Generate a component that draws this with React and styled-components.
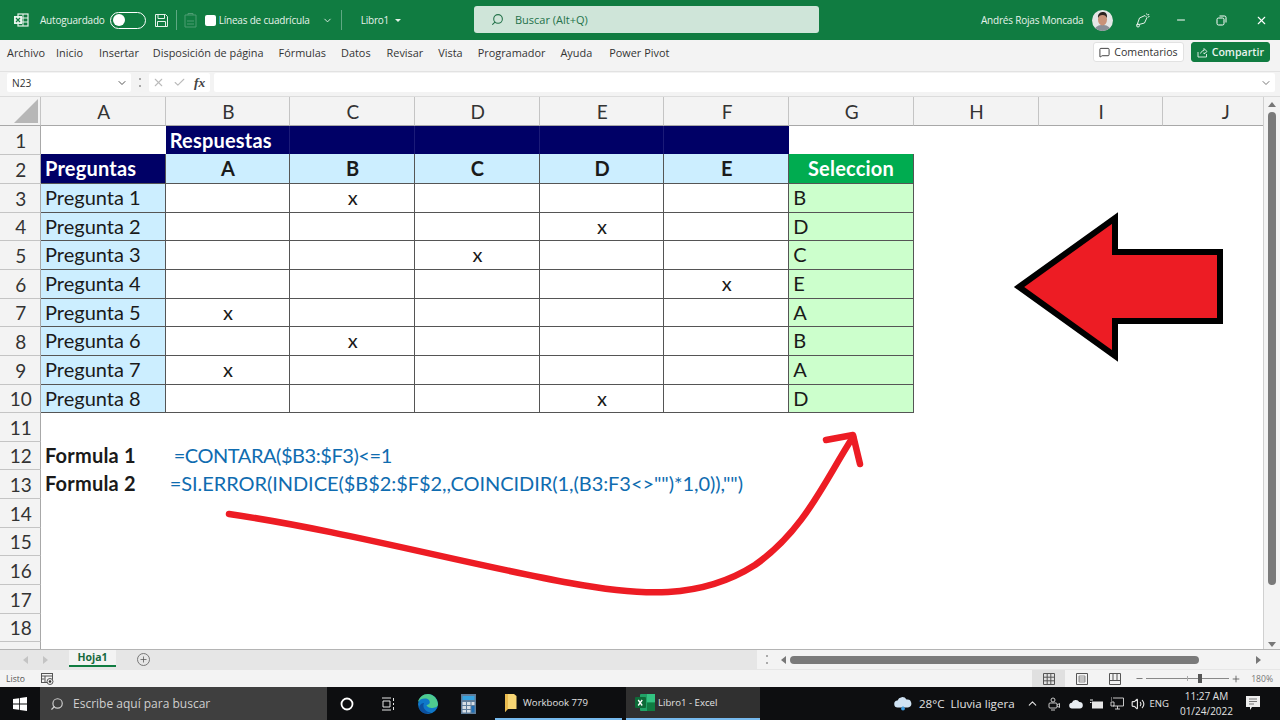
import React from "react";
import styled, { createGlobalStyle } from "styled-components";
import { Search, MessageSquare, ChevronDown, X, Check, Minus, Plus, ChevronUp, Volume2 } from "lucide-react";

const GlobalStyle = createGlobalStyle`
  html, body {
    margin: 0;
    padding: 0;
    width: 1280px;
    height: 720px;
    overflow: hidden;
    background: #fff;
  }
  * { box-sizing: border-box; }
`;

const UI_FONT = `"Open Sans", "Noto Sans", sans-serif`;
const CELL_FONT = `Lato, "Liberation Sans", sans-serif`;

const Page = styled.div`
  position: relative;
  width: 1280px;
  height: 720px;
  display: flex;
  flex-direction: column;
  overflow: hidden;
  font-family: ${UI_FONT};
`;

const Spacer = styled.span`
  display: block;
  flex: none;
  width: ${(p) => p.$w}px;
`;

const FlippedSearch = styled(Search)`
  transform: scaleX(-1);
  flex: none;
`;

/* title bar */
const TitleBar = styled.div`
  height: 40px;
  background: #107c41;
  color: #e6f2ea;
  display: flex;
  align-items: center;
  font-size: 10px;
  letter-spacing: -0.2px;
  white-space: nowrap;
  flex: none;
`;
const TitleLeft = styled.div`
  width: 474px;
  flex: none;
  display: flex;
  align-items: center;
  padding-left: 13px;
`;
const Toggle = styled.div`
  width: 36px;
  height: 17px;
  border: 1px solid #fff;
  border-radius: 9px;
  margin: 0 8px 0 5px;
  padding: 1.5px 2px;
  &::before {
    content: "";
    display: block;
    width: 12px;
    height: 12px;
    border-radius: 50%;
    background: #fff;
  }
`;
const TitleDivider = styled.div`
  width: 1px;
  height: 20px;
  background: #5fa883;
  margin: 0 ${(p) => p.$gap || 8}px;
`;
const WhiteBox = styled.div`
  width: 11px;
  height: 11px;
  background: #fff;
  border-radius: 2px;
  margin: 0 3px 0 8px;
`;
const Caret = styled.div`
  width: 0;
  height: 0;
  margin-left: 6px;
  border-left: 3px solid transparent;
  border-right: 3px solid transparent;
  border-top: 3px solid #e6f2ea;
`;
const SearchBox = styled.div`
  width: 345px;
  height: 27px;
  flex: none;
  margin-top: -1px;
  background: #cfe5d9;
  border-radius: 3px;
  display: flex;
  align-items: center;
  padding-left: 17px;
  gap: 11px;
  color: #24724a;
  font-size: 11px;
  letter-spacing: 0;
`;
const TitleRight = styled.div`
  flex: 1;
  display: flex;
  align-items: center;
  padding-left: 162px;
`;
const Avatar = styled.div`
  width: 21px;
  height: 21px;
  border-radius: 50%;
  overflow: hidden;
  margin-left: 9px;
  flex: none;
`;
const WinControl = styled.div`
  width: 40px;
  flex: none;
  display: flex;
  justify-content: center;
  align-items: center;
`;

/* ribbon tabs */
const TabsBar = styled.div`
  height: 32px;
  background: #f3f3f3;
  display: flex;
  align-items: center;
  padding: 0 10px 7px 7px;
  flex: none;
  font-size: 10.9px;
  color: #333;
  border-bottom: 1px solid #e2e2e2;
`;
const RibbonTab = styled.span`
  margin-right: ${(p) => p.$gap}px;
  white-space: nowrap;
`;
const ActionGroup = styled.div`
  margin-left: auto;
  display: flex;
  gap: 7px;
`;
const ActionButton = styled.div`
  height: 20px;
  border-radius: 3px;
  display: flex;
  align-items: center;
  gap: 4px;
  padding: 0 5px;
  font-size: 10.6px;
  background: ${(p) => (p.$primary ? "#107c41" : "#fff")};
  color: ${(p) => (p.$primary ? "#e9f4ee" : "#333")};
  font-weight: ${(p) => (p.$primary ? 600 : 400)};
  border: 1px solid ${(p) => (p.$primary ? "#107c41" : "#e2e2e2")};
`;

/* formula bar */
const FormulaBar = styled.div`
  height: 25px;
  background: #f3f3f3;
  display: flex;
  align-items: center;
  padding: 0 5px 3px 7px;
  flex: none;
  border-bottom: 1px solid #dcdcdc;
`;
const NameBox = styled.div`
  width: 124px;
  height: 19px;
  background: #fff;
  border-radius: 2px;
  display: flex;
  align-items: center;
  justify-content: space-between;
  padding: 0 3px 0 5px;
  font-size: 10.2px;
  color: #333;
`;
const Dots = styled.div`
  width: 2px;
  height: 9px;
  margin: 0 8px;
  border-top: 2px solid #aaa;
  border-bottom: 2px solid #aaa;
`;
const FxBox = styled.div`
  width: 61px;
  height: 19px;
  background: #fff;
  border-radius: 2px;
  display: flex;
  align-items: center;
  gap: 8px;
  padding: 0 3px;
  color: #bbb;
`;
const Fx = styled.span`
  font-family: "Liberation Serif", serif;
  font-style: italic;
  font-weight: 700;
  font-size: 13.5px;
  color: #444;
`;
const FormulaInput = styled.div`
  flex: 1;
  height: 19px;
  margin-left: 4px;
  background: #fff;
  display: flex;
  align-items: center;
  justify-content: flex-end;
  padding-right: 3px;
  border-radius: 2px;
`;

/* sheet */
const SheetWrap = styled.div`
  flex: 1;
  display: flex;
  min-height: 0;
  background: #fff;
`;
const Sheet = styled.div`
  width: 1263px;
  overflow: hidden;
  flex: none;
`;
const Row = styled.div`
  display: grid;
  grid-template-columns: 41px repeat(10, 124.7px);
  height: ${(p) => p.$height}px;
  font-family: ${CELL_FONT};
  font-size: 20px;
`;
const HeaderCell = styled.div`
  background: #f3f3f3;
  border-right: 1px solid #c4c4c4;
  border-bottom: 1px solid #a8a8a8;
  display: flex;
  align-items: center;
  justify-content: center;
  color: #333;
  font-size: 19px;
  padding: 1px 0 0 1.5px;
  position: relative;
`;
const RowHeader = styled(HeaderCell)`
  border-right: 1px solid #a8a8a8;
  border-bottom: none;
  border-top: ${(p) => (p.$first ? "none" : "1px solid #c4c4c4")};
  padding-top: 0;
`;
const CornerMark = styled.div`
  width: 24px;
  height: 24px;
  position: absolute;
  right: 2px;
  bottom: 2px;
  background: #b7b7b7;
  clip-path: polygon(100% 0, 100% 100%, 0 100%);
`;
const Cell = styled.div`
  background: ${(p) => p.$bg || "transparent"};
  color: ${(p) => p.$color || "#1a1a1a"};
  font-weight: ${(p) => (p.$bold ? 700 : 400)};
  letter-spacing: ${(p) => (p.$track !== undefined ? p.$track : p.$bold ? 0.2 : 0)}px;
  text-align: ${(p) => (p.$center ? "center" : "left")};
  padding-left: ${(p) => (p.$pad === undefined ? 4 : p.$pad)}px;
  padding-top: ${(p) => (p.$top ? 0 : 1)}px;
  line-height: 26px;
  white-space: nowrap;
  border-right: ${(p) => (p.$lined ? "1px solid #555" : p.$seam ? "1px solid #1b1b78" : "none")};
  border-top: ${(p) => (p.$top ? "1px solid #555" : "none")};
`;

/* scrollbars */
const VScroll = styled.div`
  flex: 1;
  background: #f3f3f3;
  border-left: 1px solid #d0d0d0;
  display: flex;
  flex-direction: column;
  align-items: center;
  padding-top: 5px;
`;
const ThumbV = styled.div`
  width: 8px;
  height: 473px;
  margin: 4.5px 0 57px;
  border-radius: 4px;
  background: #7a7a7a;
  flex: none;
`;
const ArrowUp = styled.div`
  width: 0;
  height: 0;
  flex: none;
  border-left: 4px solid transparent;
  border-right: 4px solid transparent;
  border-bottom: 5px solid #777;
`;
const ArrowDown = styled(ArrowUp)`
  border-bottom: none;
  border-top: 5px solid #777;
`;
const ArrowLeft = styled.div`
  width: 0;
  height: 0;
  flex: none;
  border-top: 4px solid transparent;
  border-bottom: 4px solid transparent;
  border-right: 5px solid ${(p) => p.$color || "#777"};
`;
const ArrowRight = styled(ArrowLeft)`
  border-right: none;
  border-left: 5px solid ${(p) => p.$color || "#777"};
`;

/* sheet tab strip */
const SheetTabs = styled.div`
  height: 20px;
  flex: none;
  background: #e6e6e6;
  border-top: 1px solid #b4b4b4;
  display: flex;
  align-items: center;
`;
const TabNav = styled.div`
  width: 69px;
  display: flex;
  justify-content: center;
  gap: 15px;
  padding-left: 2px;
`;
const SheetTab = styled.div`
  width: 47px;
  height: 17px;
  margin-top: -3px;
  background: #f3f3f3;
  border-bottom: 2px solid #107c41;
  color: #17683d;
  font-weight: 700;
  font-size: 10.5px;
  display: flex;
  align-items: center;
  justify-content: center;
`;
const AddSheet = styled.div`
  width: 13px;
  height: 13px;
  border-radius: 50%;
  border: 1px solid #777;
  margin-left: 21px;
  display: flex;
  align-items: center;
  justify-content: center;
  color: #555;
`;
const HScrollArea = styled.div`
  margin-left: auto;
  width: 523px;
  height: 100%;
  background: #f3f3f3;
  display: flex;
  align-items: center;
  padding-left: 9px;
`;
const ThumbH = styled.div`
  width: 409px;
  height: 8px;
  margin: 0 57px 0 4px;
  border-radius: 4px;
  background: #7a7a7a;
  flex: none;
`;
const TabDots = styled(Dots)`
  margin: 0 13px 0 0;
`;

/* status bar */
const StatusBar = styled.div`
  height: 18px;
  flex: none;
  background: #f3f3f3;
  border-top: 1px solid #e6e6e6;
  display: flex;
  align-items: center;
  padding-left: 6px;
  font-size: 8.6px;
  color: #555;
`;
const StatusRight = styled.div`
  margin-left: auto;
  display: flex;
  align-items: center;
  height: 100%;
`;
const ViewButton = styled.div`
  width: 33px;
  height: 100%;
  display: flex;
  align-items: center;
  justify-content: center;
  background: ${(p) => (p.$active ? "#e0e0e0" : "transparent")};
`;
const ZoomMinus = styled(Minus)`
  margin-left: 4px;
`;
const ZoomTrack = styled.div`
  width: 83px;
  height: 1px;
  background: #888;
  position: relative;
  margin: 0 2px;
  &::before {
    content: "";
    position: absolute;
    left: 41px;
    top: -2px;
    width: 1px;
    height: 5px;
    background: #aaa;
  }
`;
const ZoomThumb = styled.div`
  position: absolute;
  left: 52px;
  top: -4px;
  width: 4px;
  height: 9px;
  background: #555;
`;
const ZoomLabel = styled.span`
  margin: 0 7px 0 10px;
  color: #777;
  font-size: 8.6px;
`;

/* windows taskbar */
const Taskbar = styled.div`
  height: 33px;
  flex: none;
  background: #0d0e10;
  display: flex;
  align-items: center;
  color: #e2e2e2;
  font-size: 11px;
  white-space: nowrap;
`;
const StartButton = styled.div`
  width: 40px;
  display: flex;
  justify-content: center;
`;
const TaskSearch = styled.div`
  width: 287px;
  height: 33px;
  background: #3f3f3f;
  display: flex;
  align-items: center;
  padding-left: 10px;
  gap: 9px;
  font-size: 12px;
  color: #cfcfcf;
`;
const TaskIcon = styled.div`
  width: 40.5px;
  display: flex;
  justify-content: center;
  align-items: center;
`;
const TaskApp = styled.div`
  width: ${(p) => p.$width}px;
  height: 33px;
  margin-left: ${(p) => p.$left || 0}px;
  display: flex;
  align-items: center;
  gap: 6px;
  padding-left: 9px;
  font-size: 9.6px;
  background: ${(p) => (p.$active ? "#303030" : "transparent")};
  border-bottom: 2px solid #76b9ed;
`;
const ExcelTaskLabel = styled.span`
  margin-left: -3px;
`;
const Tray = styled.div`
  margin-left: auto;
  display: flex;
  align-items: center;
  padding-right: 20px;
`;
const Weather = styled.span`
  margin: 0 11px 0 7px;
  font-size: 11.6px;
  white-space: nowrap;
`;
const TrayIcon = styled.div`
  margin-right: ${(p) => (p.$gap === undefined ? 7 : p.$gap)}px;
  display: flex;
  align-items: center;
`;
const Lang = styled.span`
  font-size: 9.5px;
`;
const Clock = styled.div`
  text-align: center;
  font-size: 10px;
  line-height: 15px;
  margin: 0 13px 0 11px;
`;

/* hand drawn marks on top of the sheet */
const Overlay = styled.svg`
  position: absolute;
  left: 0;
  top: 0;
  width: 1280px;
  height: 720px;
  pointer-events: none;
`;

const ExcelGlyph = () => (
  <svg width="16" height="16" viewBox="0 0 16 16" fill="none">
    <rect x="5" y="2" width="10" height="12" stroke="#e8f3ec" strokeWidth="1.2" />
    <path d="M10 2v12M5 6h10M5 10h10" stroke="#e8f3ec" />
    <rect x="1" y="4" width="8" height="8" fill="#e8f3ec" />
    <path d="M3 6l4 4M7 6l-4 4" stroke="#107c41" strokeWidth="1.2" />
  </svg>
);

const SaveIcon = () => (
  <svg width="15" height="15" viewBox="0 0 15 15" fill="none" stroke="#e6f2ea" strokeWidth="1">
    <path d="M1.5 1.5h10l2 2v10h-12z" />
    <path d="M4 1.5v4h6.5v-4M3.5 13.5v-5h8v5" />
  </svg>
);

const PasteIcon = () => (
  <svg width="13" height="16" viewBox="0 0 13 16" fill="none" stroke="#4d9c72" strokeWidth="1">
    <path d="M1 3h11v12H1zM4 3V1.5h5V3" />
    <path d="M3 9h7M3 12h7" />
  </svg>
);

const FaceIcon = () => (
  <svg width="21" height="21" viewBox="0 0 21 21">
    <rect width="21" height="21" fill="#e4e6e6" />
    <path d="M2 21c1-5 5-6 8.5-6s7.5 1 8.5 6z" fill="#8b8f98" />
    <ellipse cx="10.5" cy="9.5" rx="4.5" ry="6" fill="#c99279" />
    <path d="M6 8c-.5-5 3-6 5-6s4.500 1 4 6c-1-2-2-3-4.500-3S7 6 6 8z" fill="#2c2320" />
  </svg>
);

const BrushIcon = () => (
  <svg width="16" height="16" viewBox="0 0 16 16" fill="none" stroke="#e6f2ea" strokeWidth="1">
    <path d="M2 13l2.500-7L10 3.500l2 2-2.500 5.500z" />
    <circle cx="3" cy="13.5" r="1.5" />
    <path d="M11.500 1.500l.8 1.500M14 2l-1 1.500M14.500 4.500l-1.500.5" />
  </svg>
);

const RestoreIcon = () => (
  <svg width="11" height="11" viewBox="0 0 11 11" fill="none" stroke="#fff">
    <rect x="1" y="3" width="7" height="7" rx="1.5" />
    <path d="M3.500 1h5a1.500 1.500 0 0 1 1.500 1.500v5" />
  </svg>
);

const ShareIcon = () => (
  <svg width="11" height="11" viewBox="0 0 11 11" fill="none" stroke="#e9f4ee" strokeWidth="0.9">
    <path d="M1 5v5h8.500V7M3.500 6.500C4 4.500 6 3.500 7 3.500V1.500l3 3-3 2.500V5.500" />
  </svg>
);

const MacroIcon = () => (
  <svg width="13" height="12" viewBox="0 0 13 12" fill="none" stroke="#555">
    <rect x="0.5" y="0.5" width="11" height="9" />
    <path d="M.5 3h11M4 3v6M.5 6h3" />
    <circle cx="9" cy="8.5" r="3" fill="#f3f3f3" />
    <circle cx="9" cy="8.5" r="1.3" fill="#333" stroke="none" />
  </svg>
);

const NormalViewIcon = () => (
  <svg width="12" height="12" viewBox="0 0 12 12" fill="none" stroke="#555">
    <path d="M.5.5h11v11H.5zM.5 4.200h11M.5 7.800h11M4.200.5v11M7.800.5v11" />
  </svg>
);
const PageViewIcon = () => (
  <svg width="12" height="12" viewBox="0 0 12 12" fill="none" stroke="#555">
    <path d="M.5.5h11v11H.5z" />
    <path d="M3 3h6v6H3zM3 5h6M3 7h6" strokeWidth="0.6" />
  </svg>
);
const BreakViewIcon = () => (
  <svg width="12" height="12" viewBox="0 0 12 12" fill="none" stroke="#555">
    <path d="M.5.5h11v11H.5zM.5 7.500h3.500V.5M11.500 7.500H8V.5M4 7.500h4" />
  </svg>
);

const WindowsLogo = () => (
  <svg width="14" height="14" viewBox="0 0 14 14" fill="#fff">
    <path d="M0 2l6-.8v5.400H0zM6.800 1l7.200-1v6.600H6.800zM0 7.400h6v5.400L0 12zM6.800 7.400H14V14l-7.200-1z" />
  </svg>
);

const CortanaIcon = () => (
  <svg width="14" height="14" viewBox="0 0 14 14" fill="none" stroke="#fff" strokeWidth="1.8">
    <circle cx="7" cy="7" r="5.5" />
  </svg>
);

const TaskViewIcon = () => (
  <svg width="14" height="14" viewBox="0 0 14 14" fill="none" stroke="#e6e6e6">
    <path d="M1 1h9M1 13h9M2 4h7v6H2zM12.500 1v3M12.500 6v2M12.500 10v3" />
  </svg>
);

const EdgeIcon = () => (
  <svg width="20" height="20" viewBox="0 0 20 20">
    <circle cx="10" cy="10" r="10" fill="#0f78c9" />
    <path d="M20 11c0-6-4.500-11-10-11C5 0 1 3.500 0 8c2-3 5-4 8-3.500 3 .5 4.500 3 3.500 5-1 1.500-3 1.500-3 1.500s1 3 5 3c3 0 6.500-1 6.500-3.500z" fill="#4ecb8f" />
    <path d="M6 9c-2 4 1 9 7 9.500-3 2-9 1.500-11.500-3C.5 12 3 9 6 9z" fill="#0b4f9e" />
  </svg>
);

const CalculatorIcon = () => (
  <svg width="15" height="20" viewBox="0 0 15 20">
    <rect width="15" height="20" fill="#5f7d9a" />
    <rect x="1.5" y="2" width="12" height="4" fill="#37a3e0" />
    <rect x="1.5" y="8" width="3.5" height="3" fill="#d7dee5" />
    <rect x="6" y="8" width="3.5" height="3" fill="#d7dee5" />
    <rect x="10.5" y="8" width="3" height="3" fill="#d7dee5" />
    <rect x="1.5" y="12" width="3.5" height="3" fill="#d7dee5" />
    <rect x="6" y="12" width="3.5" height="3" fill="#d7dee5" />
    <rect x="10.5" y="12" width="3" height="6.5" fill="#1f6fb5" />
    <rect x="1.5" y="16" width="3.5" height="2.5" fill="#d7dee5" />
    <rect x="6" y="16" width="3.5" height="2.5" fill="#d7dee5" />
  </svg>
);

const FolderIcon = () => (
  <svg width="13" height="18" viewBox="0 0 13 18">
    <path d="M1 0h9l2.500 2v13H3l-2 3z" fill="#f7d674" />
    <path d="M1 0h3v15l-3 3z" fill="#e9bb4f" />
  </svg>
);

const ExcelTaskIcon = () => (
  <svg width="20" height="17" viewBox="0 0 20 17">
    <rect x="5" width="15" height="17" rx="1" fill="#21a366" />
    <rect x="12" width="8" height="8.5" fill="#33c481" />
    <rect x="12" y="8.5" width="8" height="8.5" fill="#107c41" />
    <rect y="3" width="11" height="11" rx="1" fill="#0e6b38" />
    <path d="M3.200 6l4 5.500M7.200 6l-4 5.500" stroke="#fff" strokeWidth="1.3" />
  </svg>
);

const CloudIcon = ({ width = 14 }) => (
  <svg width={width} height="12" viewBox="0 0 17 12">
    <path d="M4 11.500a3.500 3.500 0 0 1-.5-7A5 5 0 0 1 12.500 3.500 4 4 0 0 1 13 11.500z" fill="#e8edf2" />
  </svg>
);

const RainCloudIcon = () => (
  <svg width="18" height="14" viewBox="0 0 18 14">
    <path d="M4 10.500a3.500 3.500 0 0 1-.5-7A5 5 0 0 1 12.500 2.500 4 4 0 0 1 14 10.500z" fill="#cfe2f3" />
    <path d="M9 9l2 2.500a2 2 0 1 1-4 0z" fill="#3d9be0" />
  </svg>
);

const MeetIcon = () => (
  <svg width="12" height="14" viewBox="0 0 12 14" fill="none" stroke="#ddd" strokeWidth="0.9">
    <circle cx="5" cy="3" r="2" />
    <rect x="1" y="6" width="8" height="5" rx="1" />
    <path d="M9 8l2.500-1.500v4L9 9M3 13h4" />
  </svg>
);

const BatteryIcon = () => (
  <svg width="13" height="10" viewBox="0 0 13 10" fill="#e6e6e6">
    <rect x="2" y="2.5" width="11" height="7" />
    <path d="M0 .5h3v1H0zM0 3h1.500v1H0z" />
  </svg>
);

const NetworkIcon = () => (
  <svg width="14" height="13" viewBox="0 0 14 13" fill="none" stroke="#ddd" strokeWidth="0.9">
    <path d="M3 1h10.500v8H3M1 1h1M1 3h1M5 12h5M7.500 9v3M1 5v4h3V5z" />
  </svg>
);

const NotifyIcon = () => (
  <svg width="14" height="15" viewBox="0 0 14 15">
    <path d="M0 0h14v11H6l-2 3v-3H0z" fill="#eee" />
    <path d="M3 3h8M3 5.500h8M3 8h5" stroke="#555" strokeWidth="0.8" />
  </svg>
);

const LETTERS = ["A", "B", "C", "D", "E", "F", "G", "H", "I", "J"];
const PICKS = ["B", "D", "C", "E", "A", "B", "A", "D"];
const ANSWER_COLS = ["A", "B", "C", "D", "E"];

// rows are 28.65px in the capture, snapped to whole pixels so the borders stay visible
const rowTop = (n) => Math.round(125.7 + (n - 1) * 28.65);
const rowHeight = (n) => rowTop(n + 1) - rowTop(n);

const Spare = ({ count }) => Array.from({ length: count }, (_, i) => <Cell key={i} />);

const App = () => {
  return (
    <Page>
      <GlobalStyle />
      <TitleBar>
        <TitleLeft>
          <ExcelGlyph />
          <Spacer $w={11} />
          <span>Autoguardado</span>
          <Toggle />
          <SaveIcon />
          <TitleDivider $gap={7} />
          <PasteIcon />
          <WhiteBox />
          <span>Líneas de cuadrícula</span>
          <Spacer $w={12} />
          <ChevronDown size={11} />
          <TitleDivider $gap={8} />
          <Spacer $w={11} />
          <span>Libro1</span>
          <Caret />
        </TitleLeft>
        <SearchBox>
          <FlippedSearch size={13} />
          Buscar (Alt+Q)
        </SearchBox>
        <TitleRight>
          <span>Andrés Rojas Moncada</span>
          <Avatar>
            <FaceIcon />
          </Avatar>
          <Spacer $w={22} />
          <BrushIcon />
          <Spacer $w={10} />
          <WinControl>
            <Minus size={12} color="#fff" />
          </WinControl>
          <WinControl>
            <RestoreIcon />
          </WinControl>
          <WinControl>
            <X size={13} color="#fff" />
          </WinControl>
        </TitleRight>
      </TitleBar>

      <TabsBar>
        <RibbonTab $gap={11}>Archivo</RibbonTab>
        <RibbonTab $gap={16}>Inicio</RibbonTab>
        <RibbonTab $gap={14}>Insertar</RibbonTab>
        <RibbonTab $gap={15}>Disposición de página</RibbonTab>
        <RibbonTab $gap={15}>Fórmulas</RibbonTab>
        <RibbonTab $gap={16}>Datos</RibbonTab>
        <RibbonTab $gap={15}>Revisar</RibbonTab>
        <RibbonTab $gap={15}>Vista</RibbonTab>
        <RibbonTab $gap={15}>Programador</RibbonTab>
        <RibbonTab $gap={17}>Ayuda</RibbonTab>
        <RibbonTab $gap={0}>Power Pivot</RibbonTab>
        <ActionGroup>
          <ActionButton>
            <MessageSquare size={11} />
            Comentarios
          </ActionButton>
          <ActionButton $primary>
            <ShareIcon />
            Compartir
          </ActionButton>
        </ActionGroup>
      </TabsBar>

      <FormulaBar>
        <NameBox>
          N23
          <ChevronDown size={12} color="#555" />
        </NameBox>
        <Dots />
        <FxBox>
          <X size={13} />
          <Check size={13} />
          <Fx>fx</Fx>
        </FxBox>
        <FormulaInput>
          <ChevronDown size={12} color="#777" />
        </FormulaInput>
      </FormulaBar>

      <SheetWrap>
        <Sheet>
          <Row $height={29}>
            <HeaderCell>
              <CornerMark />
            </HeaderCell>
            {LETTERS.map((l) => (
              <HeaderCell key={l}>{l}</HeaderCell>
            ))}
          </Row>

          <Row $height={rowHeight(1)}>
            <RowHeader $first>1</RowHeader>
            <Cell />
            <Cell $bg="#000066" $color="#fff" $bold $seam>
              Respuestas
            </Cell>
            <Cell $bg="#000066" $seam />
            <Cell $bg="#000066" $seam />
            <Cell $bg="#000066" $seam />
            <Cell $bg="#000066" />
            <Spare count={4} />
          </Row>

          <Row $height={rowHeight(2)}>
            <RowHeader>2</RowHeader>
            <Cell $bg="#000066" $color="#fff" $bold $lined>
              Preguntas
            </Cell>
            {ANSWER_COLS.map((c) => (
              <Cell key={c} $bg="#cceeff" $bold $center $lined $pad={1}>
                {c}
              </Cell>
            ))}
            <Cell $bg="#00ac50" $color="#fff" $bold $center $lined $pad={0}>
              Seleccion
            </Cell>
            <Spare count={3} />
          </Row>

          {PICKS.map((pick, i) => (
            <Row key={i} $height={rowHeight(i + 3)}>
              <RowHeader>{i + 3}</RowHeader>
              <Cell $bg="#cceeff" $lined $top>
                Pregunta {i + 1}
              </Cell>
              {ANSWER_COLS.map((c) => (
                <Cell key={c} $center $lined $top $pad={1}>
                  {c === pick ? "x" : ""}
                </Cell>
              ))}
              <Cell $bg="#ccffcc" $lined $top>
                {pick}
              </Cell>
              <Spare count={3} />
            </Row>
          ))}

          <Row $height={rowHeight(11)}>
            <RowHeader>11</RowHeader>
            {LETTERS.slice(0, 7).map((l) => (
              <Cell key={l} $top />
            ))}
            <Spare count={3} />
          </Row>
          <Row $height={rowHeight(12)}>
            <RowHeader>12</RowHeader>
            <Cell $bold>Formula 1</Cell>
            <Cell $color="#0f6cb0" $pad={8} $track={-0.45}>
              =CONTARA($B3:$F3)&lt;=1
            </Cell>
            <Spare count={8} />
          </Row>
          <Row $height={rowHeight(13)}>
            <RowHeader>13</RowHeader>
            <Cell $bold>Formula 2</Cell>
            <Cell $color="#0f6cb0" $pad={4} $track={-0.06}>
              =SI.ERROR(INDICE($B$2:$F$2,,COINCIDIR(1,(B3:F3&lt;&gt;"")*1,0)),"")
            </Cell>
            <Spare count={8} />
          </Row>
          {[14, 15, 16, 17, 18, 19].map((n) => (
            <Row key={n} $height={rowHeight(n)}>
              <RowHeader>{n === 19 ? "" : n}</RowHeader>
              <Spare count={10} />
            </Row>
          ))}
        </Sheet>
        <VScroll>
          <ArrowUp />
          <ThumbV />
          <ArrowDown />
        </VScroll>
      </SheetWrap>

      <SheetTabs>
        <TabNav>
          <ArrowLeft $color="#c4c4c4" />
          <ArrowRight $color="#c4c4c4" />
        </TabNav>
        <SheetTab>Hoja1</SheetTab>
        <AddSheet>
          <Plus size={9} />
        </AddSheet>
        <HScrollArea>
          <TabDots />
          <ArrowLeft />
          <ThumbH />
          <ArrowRight />
        </HScrollArea>
      </SheetTabs>

      <StatusBar>
        Listo
        <Spacer $w={16} />
        <MacroIcon />
        <StatusRight>
          <ViewButton $active>
            <NormalViewIcon />
          </ViewButton>
          <ViewButton>
            <PageViewIcon />
          </ViewButton>
          <ViewButton>
            <BreakViewIcon />
          </ViewButton>
          <ZoomMinus size={9} />
          <ZoomTrack>
            <ZoomThumb />
          </ZoomTrack>
          <Plus size={10} />
          <ZoomLabel>180%</ZoomLabel>
        </StatusRight>
      </StatusBar>

      <Taskbar>
        <StartButton>
          <WindowsLogo />
        </StartButton>
        <TaskSearch>
          <FlippedSearch size={14} />
          Escribe aquí para buscar
        </TaskSearch>
        <TaskIcon>
          <CortanaIcon />
        </TaskIcon>
        <TaskIcon>
          <TaskViewIcon />
        </TaskIcon>
        <TaskIcon>
          <EdgeIcon />
        </TaskIcon>
        <TaskIcon>
          <CalculatorIcon />
        </TaskIcon>
        <TaskApp $width={127} $left={6}>
          <FolderIcon />
          Workbook 779
        </TaskApp>
        <TaskApp $width={134} $left={4} $active>
          <ExcelTaskIcon />
          <ExcelTaskLabel>Libro1 - Excel</ExcelTaskLabel>
        </TaskApp>
        <Tray>
          <RainCloudIcon />
          <Weather>28°C&nbsp; Lluvia ligera</Weather>
          <TrayIcon $gap={9}>
            <ChevronUp size={13} />
          </TrayIcon>
          <TrayIcon $gap={9}>
            <MeetIcon />
          </TrayIcon>
          <TrayIcon>
            <CloudIcon />
          </TrayIcon>
          <TrayIcon>
            <BatteryIcon />
          </TrayIcon>
          <TrayIcon>
            <NetworkIcon />
          </TrayIcon>
          <TrayIcon $gap={5}>
            <Volume2 size={14} />
          </TrayIcon>
          <Lang>ENG</Lang>
          <Clock>
            11:27 AM
            <br />
            01/24/2022
          </Clock>
          <NotifyIcon />
        </Tray>
      </Taskbar>

      <Overlay viewBox="0 0 1280 720">
        <polygon
          points="1019,287 1115,218 1115,252 1220,252 1220,321 1115,321 1115,356"
          fill="#ed1c24"
          stroke="#000"
          strokeWidth="6"
          strokeMiterlimit="10"
        />
        <path
          d="M229 514 C 340 530, 470 565, 570 583 C 640 596, 700 600, 755 565 C 805 530, 825 480, 853 437"
          fill="none"
          stroke="#ed1c24"
          strokeWidth="6.5"
          strokeLinecap="round"
        />
        <path
          d="M826 440 L853 435 L860 464"
          fill="none"
          stroke="#ed1c24"
          strokeWidth="6.5"
          strokeLinecap="round"
          strokeLinejoin="round"
        />
      </Overlay>
    </Page>
  );
};

export default App;
